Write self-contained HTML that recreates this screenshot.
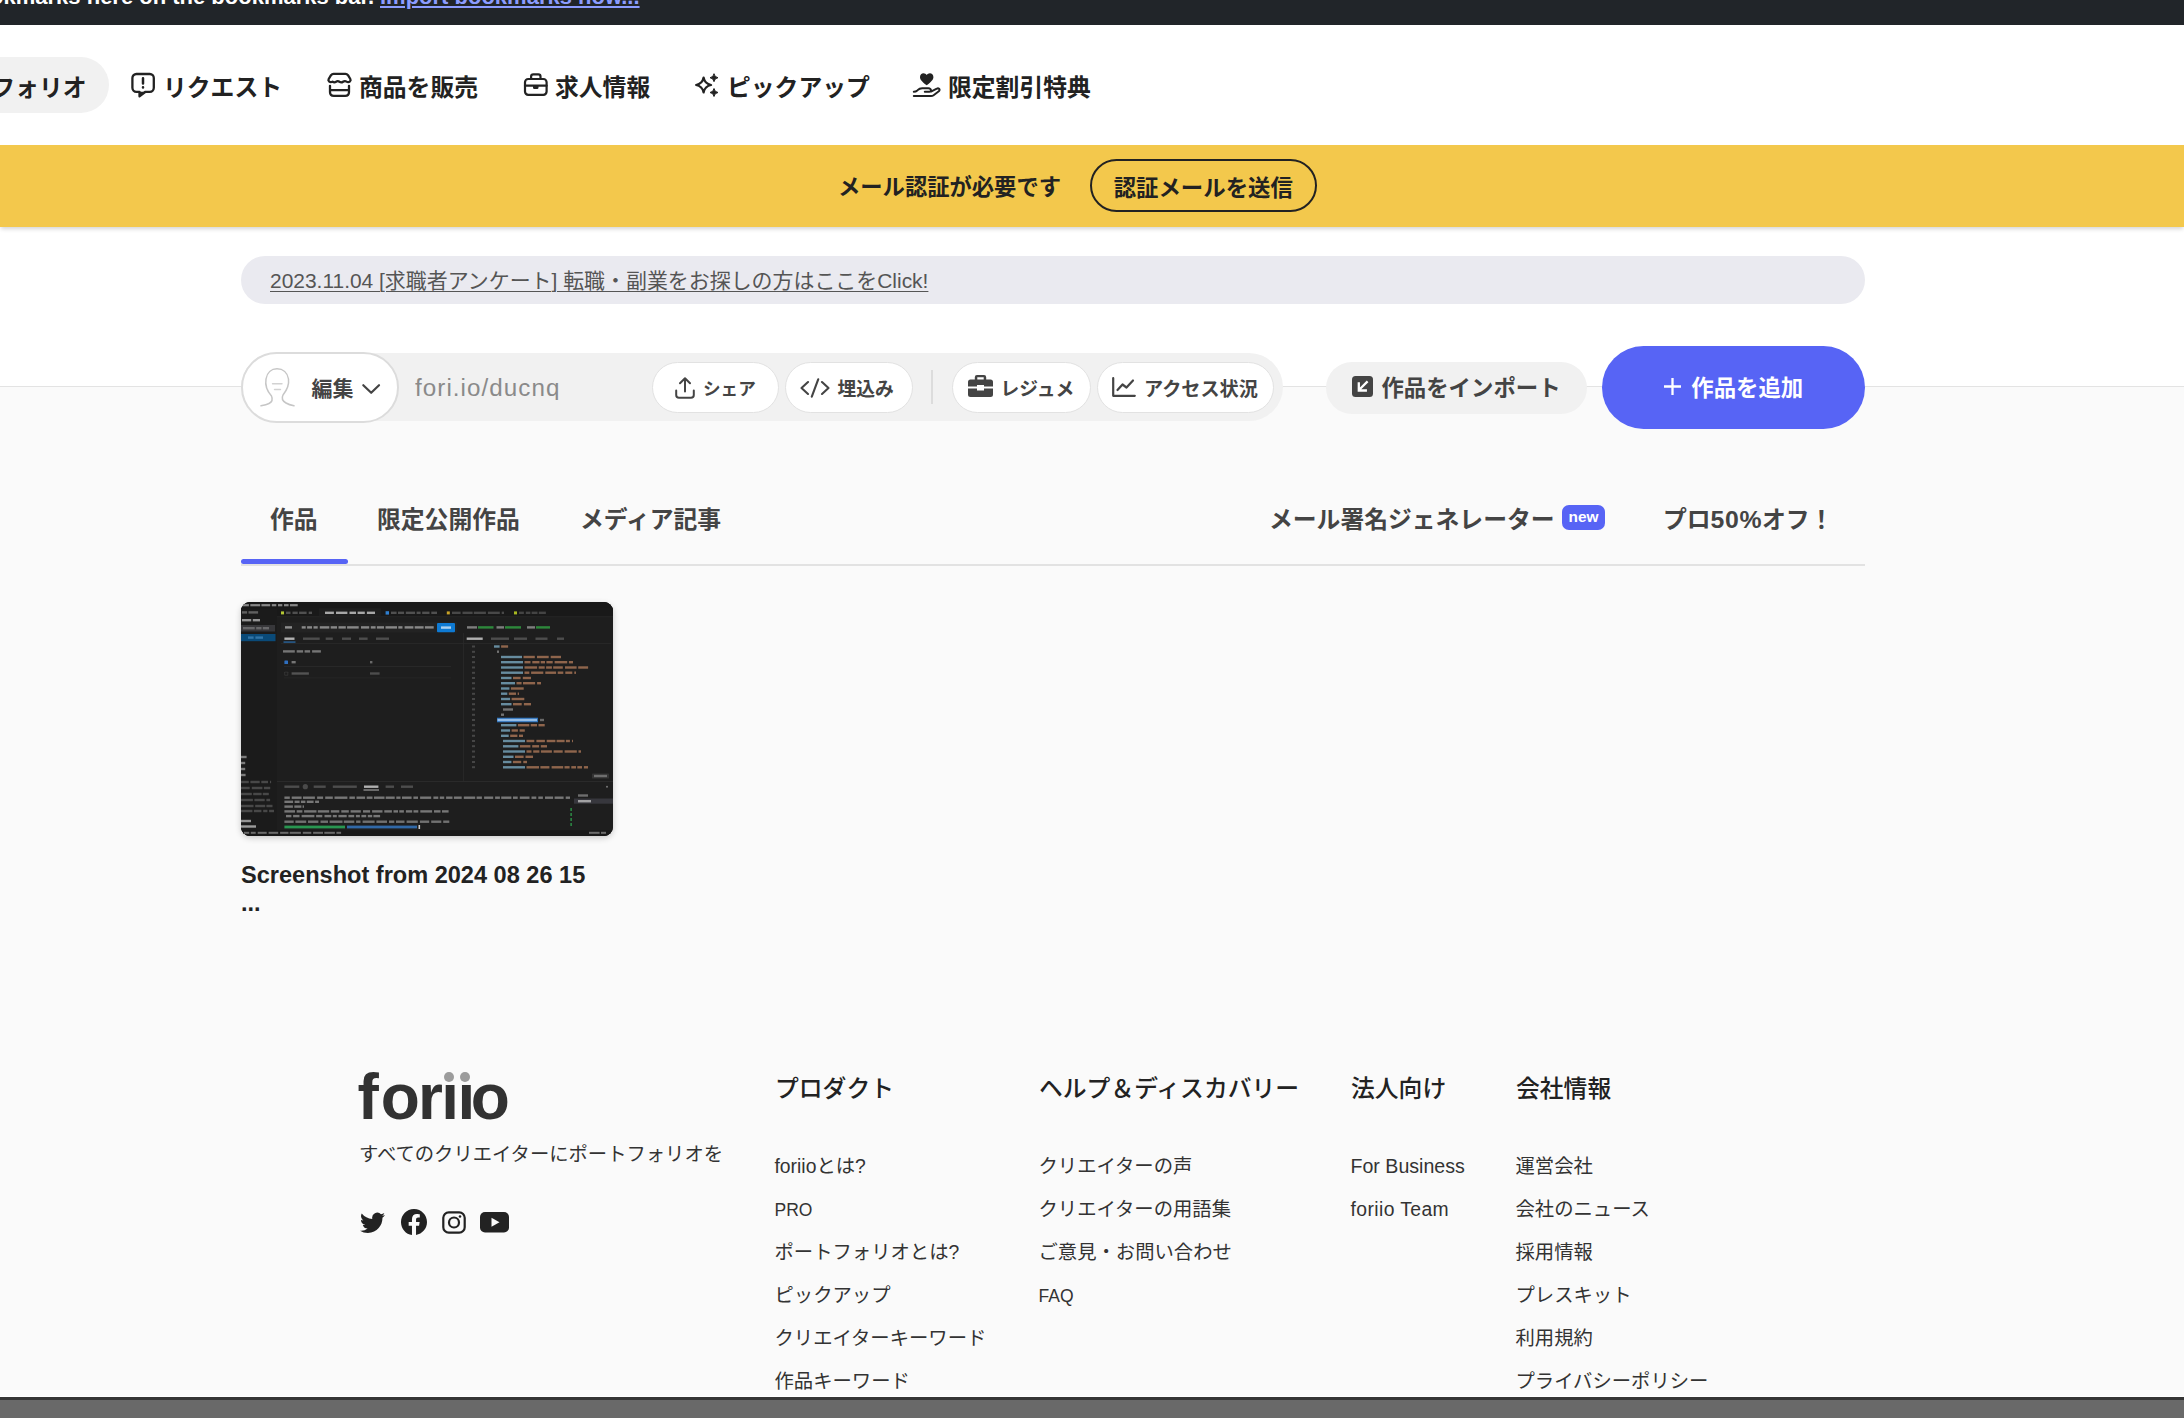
<!DOCTYPE html>
<html lang="ja">
<head>
<meta charset="utf-8">
<title>foriio</title>
<style>
*{box-sizing:border-box;margin:0;padding:0}
html,body{width:2184px;height:1418px;overflow:hidden;background:#fafafa}
body{position:relative;font-family:"Liberation Sans","Noto Sans CJK JP",sans-serif;color:#222;-webkit-font-smoothing:antialiased}
.abs{position:absolute}
a{color:inherit;text-decoration:none}
.jp{font-family:"Liberation Sans","Noto Sans CJK JP",sans-serif}
/* top bar */
#topbar{left:0;top:0;width:2184px;height:24.700px;background:#212529;overflow:hidden}
#topbar .t{position:absolute;top:-16.500px;font-size:22px;font-weight:700;line-height:26px;white-space:nowrap;color:#fff}
#topbar .t1{right:1810px}
#topbar .t2{left:380px;color:#8c9cff;text-decoration:underline;text-decoration-thickness:2px;text-underline-offset:2px}
/* nav */
#nav{left:0;top:25px;width:2184px;height:120px;background:#fff}
.nitem{position:absolute;top:32px;height:56px;display:flex;align-items:center;font-size:23.8px;font-weight:700;color:#222;white-space:nowrap;letter-spacing:0}
.nitem svg{width:24px;height:26px;margin-right:8px;flex:none;overflow:visible}
#pill{left:-120px;width:228.500px;border-radius:28px;background:#f1f1f1;justify-content:flex-end;padding-right:22px}
/* banner */
#banner{left:0;top:144.500px;width:2184px;height:82px;background:#f3c84c;z-index:2;box-shadow:0 3px 4px -1px rgba(0,0,0,.17)}
#banner .msg{position:absolute;left:838px;top:2.500px;height:82px;line-height:82px;font-size:22.300px;font-weight:700;color:#222;white-space:nowrap}
#banner .btn{position:absolute;left:1090px;top:14.500px;width:226.500px;height:52.500px;border:2px solid #222;border-radius:27px;padding-top:1px;font-size:22.4px;font-weight:700;display:flex;align-items:center;justify-content:center;white-space:nowrap}
/* white zone */
#white{left:0;top:227px;width:2184px;height:159.500px;background:#fff;border-bottom:1px solid #e3e3e3}
#notice{left:241px;top:256px;width:1624px;height:48px;border-radius:24px;background:#eaeaf0;padding-left:29px;line-height:50px;font-size:20.950px;color:#555;white-space:nowrap}
#notice span{text-decoration:underline;text-decoration-thickness:1px;text-underline-offset:3px}
/* toolbar */
#tbar{left:241px;top:353px;width:1042px;height:68px;border-radius:34px;background:#f1f1f1}
#edit{left:241px;top:351.500px;width:157.500px;height:71px;border-radius:36px;background:#fff;border:2px solid #dcdcdc}
#edit .lbl{position:absolute;left:68.500px;top:1px;height:67px;line-height:67px;font-size:21px;font-weight:700;color:#444}
#url{left:415px;top:366px;height:33.500px;overflow:hidden;line-height:44px;font-size:24.200px;letter-spacing:1.050px;color:#8a8a8a;white-space:nowrap}
.tb{position:absolute;top:362px;height:51px;border-radius:26px;background:#fff;border:1.500px solid #e2e2e2;display:flex;align-items:center;justify-content:flex-start;font-size:18.800px;font-weight:700;color:#444;white-space:nowrap}
.tb svg{flex:none}
#sep{left:931px;top:370px;width:1.5px;height:34px;background:#dcdcdc}
#import{left:1326px;top:361.500px;width:260.500px;height:52px;padding-bottom:3px;border-radius:26px;background:#f1f1f1;display:flex;align-items:center;justify-content:center;font-size:22.4px;font-weight:700;color:#444;white-space:nowrap}
#add{left:1602px;top:345.500px;width:263px;height:83px;padding-bottom:3px;border-radius:42px;background:#5764f5;display:flex;align-items:center;justify-content:center;font-size:22.4px;font-weight:700;color:#fff;white-space:nowrap}
/* tabs */
.tab{position:absolute;top:499.500px;height:40px;line-height:40px;font-size:23.8px;font-weight:700;color:#444;white-space:nowrap}
#tabline{left:241px;top:564px;width:1624px;height:1.5px;background:#e2e2e2}
#tabact{left:241px;top:559px;width:107px;height:5px;border-radius:3px;background:#5764f5}
#new{left:1562px;top:505px;width:43px;height:25px;border-radius:7px;background:#5764f5;color:#fff;font-size:15.4px;font-weight:700;line-height:24px;text-align:center}
/* card */
#thumb{left:241px;top:602px;width:372px;height:234px;border-radius:9px;overflow:hidden;background:#1d1d1e;box-shadow:0 2px 6px rgba(0,0,0,.2)}
#title{left:241px;top:860.500px;width:372px;font-size:23.550px;font-weight:700;line-height:28px;color:#222;white-space:nowrap}
/* footer */
.fh{position:absolute;top:1069.500px;height:38px;line-height:38px;font-size:23.8px;font-weight:500;color:#222;white-space:nowrap}
.fl{position:absolute;margin-left:-.500px;margin-top:.500px;height:30px;line-height:30px;font-size:19.340px;font-weight:400;color:#333;white-space:nowrap}
#logo{left:357.500px;top:1056.500px;font-size:64px;font-weight:700;line-height:80px;color:#323232;letter-spacing:-1.700px;white-space:nowrap}
#tag{left:359px;top:1139.500px;height:30px;line-height:30px;font-size:19.320px;color:#333;white-space:nowrap}
#bbar{left:0;top:1396px;width:2184px;height:22px;background:#696969;border-top:1.500px solid #fff}
#bbar:before{content:"";position:absolute;left:0;top:0;width:100%;height:3px;background:#353535}
</style>
</head>
<body>
<div id="topbar" class="abs"><span class="t t1">For quick access, place your bookmarks here on the bookmarks bar.</span><a class="t t2">Import bookmarks now...</a></div>

<div id="nav" class="abs">
  <div class="nitem" id="pill">ポートフォリオ</div>
  <div class="nitem" style="left:131px"><svg viewBox="0 0 24 26" fill="none" stroke="#222" stroke-width="2.3" stroke-linejoin="round" stroke-linecap="round"><path d="M5.400 2H18.800a4 4 0 0 1 4 4V15.800a4 4 0 0 1-4 4H14.500L8.500 24.200V19.800H5.400a4 4 0 0 1-4-4V6a4 4 0 0 1 4-4z"/><path fill="#222" stroke="none" d="M8.500 19.800h6L8.500 24.200z"/><path stroke-width="2.500" d="M12 6.300v5.300M12 15.300v.2"/></svg>リクエスト</div>
  <div class="nitem" style="left:327px"><svg viewBox="0 0 24 26" fill="none" stroke="#222" stroke-width="2.300" stroke-linejoin="round" stroke-linecap="round"><path d="M6.500 1.900H18.500Q20 1.900 21 3.200L23.300 7Q24 8.300 23 9.300Q21.300 10.800 19.500 9.600Q17.800 8.500 16 9.800Q14.300 11 12.500 9.800Q10.700 8.500 9 9.800Q7.300 11 5.500 9.600Q3.700 10.800 2 9.300Q1 8.300 1.700 7L4 3.200Q5 1.900 6.500 1.900z"/><path d="M3 13.800V20Q3 23.800 6.800 23.800H18.200Q22 23.800 22 20V13.800M3 18.100H22"/></svg>商品を販売</div>
  <div class="nitem" style="left:523px"><svg viewBox="0 0 24 26" fill="none" stroke="#222" stroke-width="2.200" stroke-linejoin="round" stroke-linecap="round"><rect x="2" y="7" width="21.600" height="15.800" rx="3.200"/><path d="M8.100 7V4.500Q8.100 2.300 10.300 2.300H15.300Q17.500 2.300 17.500 4.500V7M2 13.700H23.600"/><path fill="#222" stroke="none" d="M10 13.700h5.500v2q0 1.400-1.400 1.400h-2.700q-1.400 0-1.400-1.400z"/></svg>求人情報</div>
  <div class="nitem" style="left:695px"><svg viewBox="0 0 24 26" fill="none" stroke="#222" stroke-width="2.200" stroke-linejoin="round"><path d="M8.600 5.500Q9.800 11.800 16.100 13Q9.800 14.200 8.600 20.500Q7.400 14.200 1.100 13Q7.400 11.800 8.600 5.500z"/><path fill="#222" stroke-width="1" d="M19 1.700Q19.500 5.200 23 5.700Q19.500 6.200 19 9.700Q18.500 6.200 15 5.700Q18.500 5.200 19 1.700zM19 16.500Q19.500 20 23 20.500Q19.500 21 19 24.500Q18.500 21 15 20.500Q18.500 20 19 16.500z"/></svg>ピックアップ</div>
  <div class="nitem" style="left:912px"><svg viewBox="0 0 28 26" style="width:28px" fill="none" stroke="#222" stroke-width="2" stroke-linejoin="round" stroke-linecap="round"><path fill="#222" stroke="none" d="M14.700 13.200C9.500 9.300 8 7.300 8 4.900 8 2.800 9.600 1.200 11.500 1.200c1.300 0 2.500.7 3.200 1.800.7-1.100 1.900-1.800 3.200-1.800 1.900 0 3.500 1.600 3.500 3.700 0 2.400-1.500 4.400-6.700 8.300z"/><path d="M1.800 24H19Q20.500 24 21.600 23.200L26.800 19.300Q28.200 17.900 27.100 16.800Q26.100 16 24.800 16.700L19.500 19.400M1.800 19.700Q3.800 19.700 5.300 18.400Q7.600 16.200 10.200 16.200H16.300Q18.800 16.400 19 18.300Q19 19.800 17.300 19.800H12.800"/></svg>限定割引特典</div>
</div>

<div id="banner" class="abs"><div class="msg">メール認証が必要です</div><div class="btn">認証メールを送信</div></div>

<div id="white" class="abs"></div>
<div id="notice" class="abs"><span>2023.11.04 [求職者アンケート] 転職・副業をお探しの方はここをClick!</span></div>

<div id="tbar" class="abs"></div>
<div id="edit" class="abs">
  <svg class="abs" style="left:17px;top:14px" width="35" height="39" viewBox="0 0 35 39" fill="none" stroke="#c6c6c6" stroke-width="1.500" stroke-linecap="round" stroke-linejoin="round"><path d="M11.500 28C7 23 5 17 6 11C7 4.500 11.500.8 17 .8C23 .8 27.500 4.500 28.500 11C29.300 17 27 22 23 27C21.500 30 22.500 33 26 35C28.500 36.500 31.500 37.300 34 37.800M11.500 28C13 31.500 12 34 9 35.500C6.500 36.700 3.500 37.300 1 37.800"/><path stroke="#d2d2d2" stroke-width="1.400" d="M12.500 15.800h9.500M14.500 21.500h6"/></svg>
  <div class="lbl">編集</div>
  <svg class="abs" style="left:118px;top:28px" width="22" height="14" viewBox="0 0 22 14" fill="none" stroke="#444" stroke-width="2.200" stroke-linecap="round" stroke-linejoin="round"><path d="M2.300 3.200l7.900 7.600 7.800-7.600"/></svg>
</div>
<div id="url" class="abs">fori.io/ducnq</div>

<div class="tb" style="left:652px;width:126.500px;padding-left:21.500px;font-size:17.600px"><svg width="20" height="22" viewBox="0 0 20 22" style="margin-right:8.500px" fill="none" stroke="#444" stroke-width="2" stroke-linecap="round" stroke-linejoin="round"><path d="M10 14.500V1.800M5 6.300L10 1.300 15 6.300M1.200 13.500v4.500q0 2.800 2.800 2.800h12q2.800 0 2.800-2.800v-4.500"/></svg>シェア</div>
<div class="tb" style="left:784.500px;width:128px;padding-left:14px"><svg width="30" height="20" viewBox="0 0 30 20" style="margin-right:8px" fill="none" stroke="#444" stroke-width="2.100" stroke-linecap="round" stroke-linejoin="round"><path d="M8 4L1.500 10 8 16M22 4l6.500 6L22 16M18.200 1.300l-6.400 17.400"/></svg>埋込み</div>
<div id="sep" class="abs"></div>
<div class="tb" style="left:952px;width:138.500px;padding-left:14.500px"><svg width="25" height="22" viewBox="0 0 25 22" style="margin-right:8px;margin-top:-4px" fill="#444"><path d="M9 0h7q2.200 0 2.200 2.200V4.500h4.300q2.500 0 2.500 2.500v4.500h-9v-1.500h-7v1.500h-9V7q0-2.500 2.500-2.500h4.300V2.200Q6.800 0 9 0zm.3 2.300V4.500h6.400V2.300zM0 13.500h9v2h7v-2h9v6q0 2.500-2.500 2.500h-20Q0 22 0 19.500z"/></svg>レジュメ</div>
<div class="tb" style="left:1097px;width:176.500px;padding-left:14px;font-size:19.150px"><svg width="24" height="20" viewBox="0 0 24 20" style="margin-right:8px;margin-top:-2px" fill="none" stroke="#444" stroke-width="2.200" stroke-linecap="round" stroke-linejoin="round"><path d="M1.200 1.200V18.800H22.800M5.500 13l5-5.500 4 3 6.500-7"/></svg>アクセス状況</div>

<div id="import" class="abs"><svg width="21" height="21" viewBox="0 0 21 21" style="margin-right:8.500px;margin-top:1px"><rect width="21" height="21" rx="3.500" fill="#444"/><path d="M14.800 6.200l-7.600 7.600M6.800 7.500v7h7" fill="none" stroke="#fff" stroke-width="2.300" stroke-linecap="square"/></svg>作品をインポート</div>
<div id="add" class="abs"><svg width="17" height="17" viewBox="0 0 17 17" style="margin-right:10.500px;margin-top:2px" fill="none" stroke="#fff" stroke-width="2.300"><path d="M8.500 0v17M0 8.500h17"/></svg>作品を追加</div>

<div class="tab" style="left:270px">作品</div>
<div class="tab" style="left:377px">限定公開作品</div>
<div class="tab" style="left:580px">メディア記事</div>
<div class="tab" style="left:1269px">メール署名ジェネレーター</div>
<div id="new" class="abs">new</div>
<div class="tab" style="left:1663px">プロ<span style="font-size:24.800px;letter-spacing:.600px">50%</span>オフ！</div>
<div id="tabline" class="abs"></div>
<div id="tabact" class="abs"></div>

<div id="thumb" class="abs"><svg width="372" height="234" viewBox="0 0 372 234" shape-rendering="geometricPrecision"><rect x="0.0" y="0.0" width="372.0" height="234.0" fill="#1e1e1e"/><rect x="0.0" y="0.0" width="372.0" height="6.2" fill="#181818"/><rect x="0.0" y="6.2" width="372.0" height="8.0" fill="#191919"/><rect x="0.0" y="6.2" width="36.0" height="234.0" fill="#1b1b1b"/><rect x="36.0" y="14.2" width="336.0" height="1.0" fill="#252525"/><rect x="1.0" y="2.1" width="6.9" height="2.2" fill="#d8d8d8" opacity="0.58"/><rect x="9.3" y="2.1" width="9.9" height="2.2" fill="#d8d8d8" opacity="0.58"/><rect x="20.4" y="2.1" width="8.8" height="2.2" fill="#d8d8d8" opacity="0.58"/><rect x="30.8" y="2.1" width="4.5" height="2.2" fill="#d8d8d8" opacity="0.58"/><rect x="37.0" y="2.1" width="4.3" height="2.2" fill="#d8d8d8" opacity="0.58"/><rect x="43.0" y="2.1" width="4.6" height="2.2" fill="#d8d8d8" opacity="0.58"/><rect x="48.9" y="2.1" width="7.8" height="2.2" fill="#d8d8d8" opacity="0.58"/><rect x="1.0" y="9.2" width="5.1" height="2.4" fill="#bbb" opacity="0.43"/><rect x="7.5" y="9.2" width="9.6" height="2.4" fill="#bbb" opacity="0.43"/><rect x="1.0" y="17.0" width="9.2" height="2.4" fill="#eee" opacity="0.58"/><rect x="11.8" y="17.0" width="7.2" height="2.4" fill="#eee" opacity="0.58"/><rect x="0.0" y="23.0" width="34.0" height="6.5" fill="#37373a"/><rect x="2.0" y="25.0" width="11.7" height="2.4" fill="#aaa" opacity="0.43"/><rect x="15.2" y="25.0" width="5.3" height="2.4" fill="#aaa" opacity="0.43"/><rect x="21.8" y="25.0" width="6.2" height="2.4" fill="#aaa" opacity="0.43"/><rect x="0.0" y="32.0" width="34.5" height="7.2" fill="#0a4a78"/><rect x="7.0" y="34.4" width="5.6" height="2.4" fill="#5aa0d8" opacity="0.50"/><rect x="14.4" y="34.4" width="7.6" height="2.4" fill="#5aa0d8" opacity="0.50"/><rect x="0.0" y="153.8" width="5.6" height="2.4" fill="#ddd" opacity="0.50"/><rect x="0.0" y="159.8" width="4.2" height="2.4" fill="#ddd" opacity="0.50"/><rect x="0.0" y="165.8" width="4.2" height="2.4" fill="#ddd" opacity="0.50"/><rect x="0.0" y="171.8" width="4.6" height="2.4" fill="#ddd" opacity="0.50"/><rect x="0.0" y="178.8" width="7.8" height="2.4" fill="#999" opacity="0.36"/><rect x="9.4" y="178.8" width="9.3" height="2.4" fill="#999" opacity="0.36"/><rect x="20.3" y="178.8" width="6.7" height="2.4" fill="#999" opacity="0.36"/><rect x="29.0" y="178.8" width="1.1" height="2.4" fill="#999" opacity="0.36"/><rect x="0.0" y="184.8" width="8.7" height="2.4" fill="#999" opacity="0.36"/><rect x="10.8" y="184.8" width="10.6" height="2.4" fill="#999" opacity="0.36"/><rect x="22.9" y="184.8" width="6.3" height="2.4" fill="#999" opacity="0.36"/><rect x="0.0" y="190.8" width="10.8" height="2.4" fill="#999" opacity="0.36"/><rect x="12.2" y="190.8" width="8.4" height="2.4" fill="#999" opacity="0.36"/><rect x="21.8" y="190.8" width="6.0" height="2.4" fill="#999" opacity="0.36"/><rect x="0.0" y="196.8" width="11.9" height="2.4" fill="#999" opacity="0.36"/><rect x="13.4" y="196.8" width="10.3" height="2.4" fill="#999" opacity="0.36"/><rect x="25.4" y="196.8" width="3.7" height="2.4" fill="#999" opacity="0.36"/><rect x="0.0" y="202.8" width="12.5" height="2.4" fill="#999" opacity="0.36"/><rect x="14.2" y="202.8" width="10.0" height="2.4" fill="#999" opacity="0.36"/><rect x="25.4" y="202.8" width="6.1" height="2.4" fill="#999" opacity="0.36"/><rect x="0.0" y="207.8" width="11.4" height="2.4" fill="#999" opacity="0.36"/><rect x="12.9" y="207.8" width="7.5" height="2.4" fill="#999" opacity="0.36"/><rect x="22.2" y="207.8" width="4.2" height="2.4" fill="#999" opacity="0.36"/><rect x="28.1" y="207.8" width="4.9" height="2.4" fill="#999" opacity="0.36"/><rect x="0.0" y="217.8" width="10.0" height="2.4" fill="#eee" opacity="0.58"/><rect x="0.0" y="223.3" width="15.0" height="2.4" fill="#eee" opacity="0.61"/><rect x="40.0" y="9.4" width="3.0" height="3.0" fill="#b5c734"/><rect x="45.0" y="9.6" width="4.5" height="2.4" fill="#999" opacity="0.43"/><rect x="51.5" y="9.6" width="5.2" height="2.4" fill="#999" opacity="0.43"/><rect x="58.1" y="9.6" width="7.5" height="2.4" fill="#999" opacity="0.43"/><rect x="67.7" y="9.6" width="3.3" height="2.4" fill="#999" opacity="0.43"/><rect x="78.0" y="6.2" width="62.0" height="8.0" fill="#1e1e1e"/><rect x="84.0" y="9.6" width="8.9" height="2.4" fill="#fff" opacity="0.61"/><rect x="95.0" y="9.6" width="11.4" height="2.4" fill="#fff" opacity="0.61"/><rect x="108.5" y="9.6" width="6.5" height="2.4" fill="#fff" opacity="0.61"/><rect x="116.6" y="9.6" width="7.2" height="2.4" fill="#fff" opacity="0.61"/><rect x="125.9" y="9.6" width="8.1" height="2.4" fill="#fff" opacity="0.61"/><rect x="144.6" y="9.2" width="3.4" height="3.4" fill="#2f7fd0"/><rect x="150.0" y="9.6" width="5.6" height="2.4" fill="#999" opacity="0.43"/><rect x="157.0" y="9.6" width="6.1" height="2.4" fill="#999" opacity="0.43"/><rect x="164.8" y="9.6" width="9.3" height="2.4" fill="#999" opacity="0.43"/><rect x="175.6" y="9.6" width="4.0" height="2.4" fill="#999" opacity="0.43"/><rect x="181.2" y="9.6" width="7.3" height="2.4" fill="#999" opacity="0.43"/><rect x="190.3" y="9.6" width="5.7" height="2.4" fill="#999" opacity="0.43"/><rect x="205.8" y="9.4" width="3.0" height="3.0" fill="#c9a227"/><rect x="211.0" y="9.6" width="8.6" height="2.4" fill="#8f8f8f" opacity="0.40"/><rect x="221.5" y="9.6" width="10.1" height="2.4" fill="#8f8f8f" opacity="0.40"/><rect x="232.8" y="9.6" width="12.1" height="2.4" fill="#8f8f8f" opacity="0.40"/><rect x="246.9" y="9.6" width="11.9" height="2.4" fill="#8f8f8f" opacity="0.40"/><rect x="260.7" y="9.6" width="2.3" height="2.4" fill="#8f8f8f" opacity="0.40"/><rect x="273.0" y="9.4" width="3.0" height="3.0" fill="#a8b820"/><rect x="278.0" y="9.6" width="4.9" height="2.4" fill="#8f8f8f" opacity="0.36"/><rect x="284.8" y="9.6" width="4.6" height="2.4" fill="#8f8f8f" opacity="0.36"/><rect x="290.6" y="9.6" width="5.9" height="2.4" fill="#8f8f8f" opacity="0.36"/><rect x="297.8" y="9.6" width="7.1" height="2.4" fill="#8f8f8f" opacity="0.36"/><rect x="40.0" y="20.5" width="176.0" height="10.0" fill="#232323"/><rect x="44.0" y="24.2" width="7.0" height="2.4" fill="#ddd" opacity="0.58"/><rect x="60.7" y="24.2" width="4.0" height="2.4" fill="#ddd" opacity="0.54"/><rect x="66.1" y="24.2" width="4.9" height="2.4" fill="#ddd" opacity="0.54"/><rect x="72.5" y="24.2" width="4.2" height="2.4" fill="#ddd" opacity="0.54"/><rect x="78.8" y="24.2" width="9.5" height="2.4" fill="#ddd" opacity="0.54"/><rect x="89.7" y="24.2" width="6.3" height="2.4" fill="#ddd" opacity="0.54"/><rect x="97.5" y="24.2" width="7.3" height="2.4" fill="#ddd" opacity="0.54"/><rect x="106.1" y="24.2" width="11.6" height="2.4" fill="#ddd" opacity="0.54"/><rect x="120.0" y="24.2" width="8.2" height="2.4" fill="#ddd" opacity="0.54"/><rect x="129.8" y="24.2" width="4.8" height="2.4" fill="#ddd" opacity="0.54"/><rect x="135.9" y="24.2" width="7.1" height="2.4" fill="#ddd" opacity="0.54"/><rect x="144.5" y="24.2" width="11.5" height="2.4" fill="#ddd" opacity="0.54"/><rect x="157.3" y="24.2" width="4.2" height="2.4" fill="#ddd" opacity="0.54"/><rect x="163.6" y="24.2" width="8.8" height="2.4" fill="#ddd" opacity="0.54"/><rect x="173.7" y="24.2" width="8.9" height="2.4" fill="#ddd" opacity="0.54"/><rect x="183.9" y="24.2" width="8.8" height="2.4" fill="#ddd" opacity="0.54"/><rect x="196.0" y="21.0" width="18.0" height="9.2" fill="#0e7ad3" rx="1"/><rect x="200.0" y="24.4" width="10.0" height="2.4" fill="#fff" opacity="0.65"/><rect x="226.0" y="24.2" width="10.0" height="2.4" fill="#ddd" opacity="0.50"/><rect x="237.0" y="24.2" width="15.5" height="2.4" fill="#36c24c" opacity="0.65"/><rect x="255.5" y="24.2" width="7.5" height="2.4" fill="#ddd" opacity="0.50"/><rect x="264.0" y="24.2" width="16.0" height="2.4" fill="#36c24c" opacity="0.65"/><rect x="286.0" y="24.2" width="8.0" height="2.4" fill="#ddd" opacity="0.50"/><rect x="295.0" y="24.2" width="14.0" height="2.4" fill="#36c24c" opacity="0.65"/><rect x="43.4" y="35.5" width="10.1" height="2.4" fill="#fff" opacity="0.65"/><rect x="42.5" y="39.6" width="12.0" height="0.9" fill="#2f8ae0"/><rect x="62.0" y="35.5" width="16.7" height="2.4" fill="#8a8a8a" opacity="0.43"/><rect x="84.7" y="35.5" width="7.1" height="2.4" fill="#8a8a8a" opacity="0.43"/><rect x="101.0" y="35.5" width="9.0" height="2.4" fill="#8a8a8a" opacity="0.43"/><rect x="118.0" y="35.5" width="8.6" height="2.4" fill="#8a8a8a" opacity="0.43"/><rect x="135.0" y="35.5" width="13.0" height="2.4" fill="#8a8a8a" opacity="0.43"/><rect x="40.0" y="41.0" width="330.0" height="0.7" fill="#2c2c2c"/><rect x="225.7" y="35.5" width="16.0" height="2.4" fill="#fff" opacity="0.65"/><rect x="250.0" y="35.5" width="18.0" height="2.4" fill="#8a8a8a" opacity="0.43"/><rect x="273.0" y="35.5" width="13.0" height="2.4" fill="#8a8a8a" opacity="0.43"/><rect x="294.5" y="35.5" width="12.0" height="2.4" fill="#8a8a8a" opacity="0.43"/><rect x="316.0" y="35.5" width="7.0" height="2.4" fill="#8a8a8a" opacity="0.43"/><rect x="222.3" y="31.0" width="0.8" height="148.0" fill="#2b2b2b"/><rect x="42.0" y="48.2" width="11.8" height="2.4" fill="#ccc" opacity="0.50"/><rect x="55.7" y="48.2" width="6.4" height="2.4" fill="#ccc" opacity="0.50"/><rect x="63.6" y="48.2" width="5.5" height="2.4" fill="#ccc" opacity="0.50"/><rect x="71.1" y="48.2" width="8.8" height="2.4" fill="#ccc" opacity="0.50"/><rect x="43.4" y="58.4" width="3.6" height="3.6" fill="#2f6fc0" rx="0.6"/><rect x="50.6" y="59.0" width="4.1" height="2.4" fill="#ccc" opacity="0.50"/><rect x="129.0" y="59.0" width="2.4" height="2.4" fill="#ccc" opacity="0.43"/><rect x="43.0" y="64.3" width="167.0" height="0.6" fill="#303030"/><rect x="43.4" y="69.7" width="3.8" height="3.8" fill="#3a3a3a" rx="0.6"/><rect x="44.1" y="70.4" width="2.4" height="2.4" fill="#1e1e1e"/><rect x="50.6" y="70.3" width="17.3" height="2.4" fill="#9a9a9a" opacity="0.43"/><rect x="129.0" y="70.3" width="9.6" height="2.4" fill="#8a8a8a" opacity="0.43"/><rect x="43.0" y="75.6" width="167.0" height="0.6" fill="#2a2a2a"/><rect x="231.0" y="43.5" width="3.0" height="2.0" fill="#6e6e6e" opacity="0.50"/><rect x="253.0" y="43.3" width="5.6" height="2.4" fill="#9cdcfe" opacity="0.58"/><rect x="260.1" y="43.3" width="7.0" height="2.4" fill="#d7936b" opacity="0.61"/><rect x="231.0" y="48.8" width="3.0" height="2.0" fill="#6e6e6e" opacity="0.50"/><rect x="256.0" y="48.5" width="2.0" height="2.4" fill="#c8c8c8" opacity="0.50"/><rect x="231.0" y="54.0" width="3.0" height="2.0" fill="#6e6e6e" opacity="0.50"/><rect x="260.0" y="53.8" width="21.0" height="2.4" fill="#9cdcfe" opacity="0.58"/><rect x="282.5" y="53.8" width="11.3" height="2.4" fill="#d7936b" opacity="0.61"/><rect x="296.0" y="53.8" width="11.7" height="2.4" fill="#d7936b" opacity="0.61"/><rect x="309.7" y="53.8" width="10.3" height="2.4" fill="#d7936b" opacity="0.61"/><rect x="231.0" y="59.2" width="3.0" height="2.0" fill="#6e6e6e" opacity="0.50"/><rect x="260.0" y="59.0" width="22.0" height="2.4" fill="#9cdcfe" opacity="0.58"/><rect x="283.5" y="59.0" width="6.0" height="2.4" fill="#d7936b" opacity="0.61"/><rect x="291.3" y="59.0" width="7.2" height="2.4" fill="#d7936b" opacity="0.61"/><rect x="299.7" y="59.0" width="4.3" height="2.4" fill="#d7936b" opacity="0.61"/><rect x="305.4" y="59.0" width="6.3" height="2.4" fill="#d7936b" opacity="0.61"/><rect x="313.6" y="59.0" width="12.6" height="2.4" fill="#d7936b" opacity="0.61"/><rect x="327.9" y="59.0" width="4.1" height="2.4" fill="#d7936b" opacity="0.61"/><rect x="231.0" y="64.5" width="3.0" height="2.0" fill="#6e6e6e" opacity="0.50"/><rect x="260.0" y="64.3" width="22.0" height="2.4" fill="#9cdcfe" opacity="0.58"/><rect x="283.5" y="64.3" width="12.6" height="2.4" fill="#d7936b" opacity="0.61"/><rect x="297.7" y="64.3" width="6.0" height="2.4" fill="#d7936b" opacity="0.61"/><rect x="305.1" y="64.3" width="5.8" height="2.4" fill="#d7936b" opacity="0.61"/><rect x="312.2" y="64.3" width="9.6" height="2.4" fill="#d7936b" opacity="0.61"/><rect x="324.0" y="64.3" width="11.6" height="2.4" fill="#d7936b" opacity="0.61"/><rect x="337.2" y="64.3" width="9.9" height="2.4" fill="#d7936b" opacity="0.61"/><rect x="231.0" y="69.8" width="3.0" height="2.0" fill="#6e6e6e" opacity="0.50"/><rect x="260.0" y="69.5" width="22.0" height="2.4" fill="#9cdcfe" opacity="0.58"/><rect x="283.5" y="69.5" width="4.8" height="2.4" fill="#d7936b" opacity="0.61"/><rect x="290.1" y="69.5" width="12.2" height="2.4" fill="#d7936b" opacity="0.61"/><rect x="304.3" y="69.5" width="10.8" height="2.4" fill="#d7936b" opacity="0.61"/><rect x="316.7" y="69.5" width="5.6" height="2.4" fill="#d7936b" opacity="0.61"/><rect x="324.3" y="69.5" width="7.0" height="2.4" fill="#d7936b" opacity="0.61"/><rect x="333.3" y="69.5" width="1.7" height="2.4" fill="#d7936b" opacity="0.61"/><rect x="231.0" y="75.0" width="3.0" height="2.0" fill="#6e6e6e" opacity="0.50"/><rect x="260.0" y="74.8" width="10.5" height="2.4" fill="#9cdcfe" opacity="0.58"/><rect x="272.0" y="74.8" width="7.6" height="2.4" fill="#d7936b" opacity="0.61"/><rect x="281.8" y="74.8" width="8.2" height="2.4" fill="#d7936b" opacity="0.61"/><rect x="231.0" y="80.2" width="3.0" height="2.0" fill="#6e6e6e" opacity="0.50"/><rect x="260.0" y="80.0" width="14.0" height="2.4" fill="#9cdcfe" opacity="0.58"/><rect x="275.5" y="80.0" width="5.1" height="2.4" fill="#d7936b" opacity="0.61"/><rect x="282.0" y="80.0" width="12.1" height="2.4" fill="#d7936b" opacity="0.61"/><rect x="296.1" y="80.0" width="3.9" height="2.4" fill="#d7936b" opacity="0.61"/><rect x="231.0" y="85.5" width="3.0" height="2.0" fill="#6e6e6e" opacity="0.50"/><rect x="260.0" y="85.3" width="8.4" height="2.4" fill="#9cdcfe" opacity="0.58"/><rect x="269.9" y="85.3" width="12.8" height="2.4" fill="#d7936b" opacity="0.61"/><rect x="231.0" y="90.8" width="3.0" height="2.0" fill="#6e6e6e" opacity="0.50"/><rect x="260.0" y="90.5" width="6.3" height="2.4" fill="#9cdcfe" opacity="0.58"/><rect x="267.8" y="90.5" width="7.2" height="2.4" fill="#d7936b" opacity="0.61"/><rect x="276.7" y="90.5" width="1.3" height="2.4" fill="#d7936b" opacity="0.61"/><rect x="231.0" y="96.0" width="3.0" height="2.0" fill="#6e6e6e" opacity="0.50"/><rect x="260.0" y="95.8" width="9.1" height="2.4" fill="#9cdcfe" opacity="0.58"/><rect x="270.6" y="95.8" width="12.7" height="2.4" fill="#d7936b" opacity="0.61"/><rect x="231.0" y="101.2" width="3.0" height="2.0" fill="#6e6e6e" opacity="0.50"/><rect x="260.0" y="101.0" width="10.5" height="2.4" fill="#9cdcfe" opacity="0.58"/><rect x="272.0" y="101.0" width="8.7" height="2.4" fill="#d7936b" opacity="0.61"/><rect x="282.9" y="101.0" width="7.1" height="2.4" fill="#d7936b" opacity="0.61"/><rect x="231.0" y="106.5" width="3.0" height="2.0" fill="#6e6e6e" opacity="0.50"/><rect x="262.0" y="106.3" width="10.0" height="2.4" fill="#c8c8c8" opacity="0.50"/><rect x="231.0" y="111.8" width="3.0" height="2.0" fill="#6e6e6e" opacity="0.50"/><rect x="260.0" y="111.5" width="3.0" height="2.4" fill="#c8c8c8" opacity="0.50"/><rect x="231.0" y="117.0" width="3.0" height="2.0" fill="#6e6e6e" opacity="0.50"/><rect x="256.0" y="115.7" width="41.0" height="4.6" fill="#2a6fb8"/><rect x="256.5" y="116.8" width="39.5" height="2.4" fill="#cfe6ff" opacity="0.65"/><rect x="299.0" y="116.8" width="4.0" height="2.4" fill="#ccc" opacity="0.43"/><rect x="231.0" y="122.2" width="3.0" height="2.0" fill="#6e6e6e" opacity="0.50"/><rect x="260.0" y="122.0" width="15.4" height="2.4" fill="#9cdcfe" opacity="0.58"/><rect x="276.9" y="122.0" width="11.4" height="2.4" fill="#d7936b" opacity="0.61"/><rect x="289.7" y="122.0" width="6.3" height="2.4" fill="#d7936b" opacity="0.61"/><rect x="297.5" y="122.0" width="6.2" height="2.4" fill="#d7936b" opacity="0.61"/><rect x="231.0" y="127.5" width="3.0" height="2.0" fill="#6e6e6e" opacity="0.50"/><rect x="260.0" y="127.3" width="9.1" height="2.4" fill="#9cdcfe" opacity="0.58"/><rect x="270.6" y="127.3" width="6.3" height="2.4" fill="#d7936b" opacity="0.61"/><rect x="278.6" y="127.3" width="5.2" height="2.4" fill="#d7936b" opacity="0.61"/><rect x="231.0" y="132.8" width="3.0" height="2.0" fill="#6e6e6e" opacity="0.50"/><rect x="260.0" y="132.6" width="7.7" height="2.4" fill="#9cdcfe" opacity="0.58"/><rect x="269.2" y="132.6" width="7.2" height="2.4" fill="#d7936b" opacity="0.61"/><rect x="278.0" y="132.6" width="4.0" height="2.4" fill="#d7936b" opacity="0.61"/><rect x="231.0" y="138.0" width="3.0" height="2.0" fill="#6e6e6e" opacity="0.50"/><rect x="262.0" y="137.8" width="22.0" height="2.4" fill="#9cdcfe" opacity="0.58"/><rect x="285.5" y="137.8" width="7.8" height="2.4" fill="#d7936b" opacity="0.61"/><rect x="295.4" y="137.8" width="8.5" height="2.4" fill="#d7936b" opacity="0.61"/><rect x="305.7" y="137.8" width="8.7" height="2.4" fill="#d7936b" opacity="0.61"/><rect x="315.6" y="137.8" width="8.0" height="2.4" fill="#d7936b" opacity="0.61"/><rect x="324.9" y="137.8" width="4.0" height="2.4" fill="#d7936b" opacity="0.61"/><rect x="331.0" y="137.8" width="1.0" height="2.4" fill="#d7936b" opacity="0.61"/><rect x="231.0" y="143.2" width="3.0" height="2.0" fill="#6e6e6e" opacity="0.50"/><rect x="262.0" y="143.1" width="15.4" height="2.4" fill="#9cdcfe" opacity="0.58"/><rect x="278.9" y="143.1" width="10.5" height="2.4" fill="#d7936b" opacity="0.61"/><rect x="291.2" y="143.1" width="6.9" height="2.4" fill="#d7936b" opacity="0.61"/><rect x="299.8" y="143.1" width="6.2" height="2.4" fill="#d7936b" opacity="0.61"/><rect x="231.0" y="148.5" width="3.0" height="2.0" fill="#6e6e6e" opacity="0.50"/><rect x="262.0" y="148.3" width="22.0" height="2.4" fill="#9cdcfe" opacity="0.58"/><rect x="285.5" y="148.3" width="5.0" height="2.4" fill="#d7936b" opacity="0.61"/><rect x="292.2" y="148.3" width="6.2" height="2.4" fill="#d7936b" opacity="0.61"/><rect x="299.9" y="148.3" width="11.0" height="2.4" fill="#d7936b" opacity="0.61"/><rect x="312.6" y="148.3" width="9.1" height="2.4" fill="#d7936b" opacity="0.61"/><rect x="323.6" y="148.3" width="12.2" height="2.4" fill="#d7936b" opacity="0.61"/><rect x="337.5" y="148.3" width="2.5" height="2.4" fill="#d7936b" opacity="0.61"/><rect x="231.0" y="153.8" width="3.0" height="2.0" fill="#6e6e6e" opacity="0.50"/><rect x="262.0" y="153.6" width="10.5" height="2.4" fill="#9cdcfe" opacity="0.58"/><rect x="274.0" y="153.6" width="8.6" height="2.4" fill="#d7936b" opacity="0.61"/><rect x="284.5" y="153.6" width="7.5" height="2.4" fill="#d7936b" opacity="0.61"/><rect x="231.0" y="159.0" width="3.0" height="2.0" fill="#6e6e6e" opacity="0.50"/><rect x="262.0" y="158.8" width="8.4" height="2.4" fill="#9cdcfe" opacity="0.58"/><rect x="271.9" y="158.8" width="8.3" height="2.4" fill="#d7936b" opacity="0.61"/><rect x="282.3" y="158.8" width="3.7" height="2.4" fill="#d7936b" opacity="0.61"/><rect x="231.0" y="164.2" width="3.0" height="2.0" fill="#6e6e6e" opacity="0.50"/><rect x="262.0" y="164.1" width="22.0" height="2.4" fill="#9cdcfe" opacity="0.58"/><rect x="285.5" y="164.1" width="12.5" height="2.4" fill="#d7936b" opacity="0.61"/><rect x="299.4" y="164.1" width="9.0" height="2.4" fill="#d7936b" opacity="0.61"/><rect x="310.6" y="164.1" width="11.6" height="2.4" fill="#d7936b" opacity="0.61"/><rect x="323.5" y="164.1" width="5.1" height="2.4" fill="#d7936b" opacity="0.61"/><rect x="330.3" y="164.1" width="4.7" height="2.4" fill="#d7936b" opacity="0.61"/><rect x="336.3" y="164.1" width="4.7" height="2.4" fill="#d7936b" opacity="0.61"/><rect x="342.9" y="164.1" width="4.1" height="2.4" fill="#d7936b" opacity="0.61"/><rect x="351.0" y="171.5" width="17.0" height="5.0" fill="#333" rx="0.5"/><rect x="353.0" y="172.8" width="13.0" height="2.4" fill="#aaa" opacity="0.50"/><rect x="36.0" y="179.2" width="336.0" height="0.8" fill="#2e2e2e"/><rect x="43.4" y="183.5" width="14.9" height="2.4" fill="#8a8a8a" opacity="0.43"/><circle cx="64.3" cy="184.7" r="2.6" fill="#4a4a4a"/><rect x="72.7" y="183.5" width="12.0" height="2.4" fill="#8a8a8a" opacity="0.43"/><rect x="91.8" y="183.5" width="24.0" height="2.4" fill="#8a8a8a" opacity="0.43"/><rect x="144.6" y="183.5" width="8.4" height="2.4" fill="#8a8a8a" opacity="0.43"/><rect x="160.0" y="183.5" width="12.0" height="2.4" fill="#8a8a8a" opacity="0.43"/><rect x="123.0" y="183.5" width="14.4" height="2.4" fill="#fff" opacity="0.65"/><rect x="122.5" y="187.6" width="15.5" height="0.8" fill="#ddd"/><rect x="43.4" y="194.5" width="5.4" height="2.4" fill="#d0d0d0" opacity="0.50"/><rect x="50.7" y="194.5" width="9.9" height="2.4" fill="#d0d0d0" opacity="0.50"/><rect x="62.0" y="194.5" width="11.9" height="2.4" fill="#d0d0d0" opacity="0.50"/><rect x="76.1" y="194.5" width="6.0" height="2.4" fill="#d0d0d0" opacity="0.50"/><rect x="84.2" y="194.5" width="7.6" height="2.4" fill="#d0d0d0" opacity="0.50"/><rect x="93.5" y="194.5" width="12.9" height="2.4" fill="#d0d0d0" opacity="0.50"/><rect x="108.4" y="194.5" width="5.5" height="2.4" fill="#d0d0d0" opacity="0.50"/><rect x="115.5" y="194.5" width="8.6" height="2.4" fill="#d0d0d0" opacity="0.50"/><rect x="125.7" y="194.5" width="5.8" height="2.4" fill="#d0d0d0" opacity="0.50"/><rect x="133.0" y="194.5" width="10.5" height="2.4" fill="#d0d0d0" opacity="0.50"/><rect x="144.7" y="194.5" width="9.0" height="2.4" fill="#d0d0d0" opacity="0.50"/><rect x="155.3" y="194.5" width="4.2" height="2.4" fill="#d0d0d0" opacity="0.50"/><rect x="161.0" y="194.5" width="9.6" height="2.4" fill="#d0d0d0" opacity="0.50"/><rect x="172.4" y="194.5" width="4.6" height="2.4" fill="#d0d0d0" opacity="0.50"/><rect x="179.1" y="194.5" width="11.1" height="2.4" fill="#d0d0d0" opacity="0.50"/><rect x="192.4" y="194.5" width="4.9" height="2.4" fill="#d0d0d0" opacity="0.50"/><rect x="198.8" y="194.5" width="4.4" height="2.4" fill="#d0d0d0" opacity="0.50"/><rect x="205.1" y="194.5" width="6.4" height="2.4" fill="#d0d0d0" opacity="0.50"/><rect x="212.9" y="194.5" width="7.8" height="2.4" fill="#d0d0d0" opacity="0.50"/><rect x="222.8" y="194.5" width="11.4" height="2.4" fill="#d0d0d0" opacity="0.50"/><rect x="235.6" y="194.5" width="5.3" height="2.4" fill="#d0d0d0" opacity="0.50"/><rect x="243.1" y="194.5" width="9.1" height="2.4" fill="#d0d0d0" opacity="0.50"/><rect x="254.1" y="194.5" width="4.8" height="2.4" fill="#d0d0d0" opacity="0.50"/><rect x="260.2" y="194.5" width="10.2" height="2.4" fill="#d0d0d0" opacity="0.50"/><rect x="272.0" y="194.5" width="4.7" height="2.4" fill="#d0d0d0" opacity="0.50"/><rect x="278.8" y="194.5" width="9.7" height="2.4" fill="#d0d0d0" opacity="0.50"/><rect x="290.5" y="194.5" width="4.8" height="2.4" fill="#d0d0d0" opacity="0.50"/><rect x="297.3" y="194.5" width="4.6" height="2.4" fill="#d0d0d0" opacity="0.50"/><rect x="304.0" y="194.5" width="8.1" height="2.4" fill="#d0d0d0" opacity="0.50"/><rect x="313.6" y="194.5" width="9.0" height="2.4" fill="#d0d0d0" opacity="0.50"/><rect x="324.7" y="194.5" width="4.3" height="2.4" fill="#d0d0d0" opacity="0.50"/><rect x="43.4" y="198.6" width="8.7" height="2.4" fill="#d0d0d0" opacity="0.50"/><rect x="53.6" y="198.6" width="5.0" height="2.4" fill="#d0d0d0" opacity="0.50"/><rect x="59.9" y="198.6" width="4.5" height="2.4" fill="#d0d0d0" opacity="0.50"/><rect x="65.8" y="198.6" width="6.8" height="2.4" fill="#d0d0d0" opacity="0.50"/><rect x="74.1" y="198.6" width="3.9" height="2.4" fill="#d0d0d0" opacity="0.50"/><rect x="43.4" y="203.4" width="8.5" height="2.4" fill="#d0d0d0" opacity="0.50"/><rect x="53.3" y="203.4" width="7.1" height="2.4" fill="#d0d0d0" opacity="0.50"/><rect x="61.6" y="203.4" width="1.4" height="2.4" fill="#d0d0d0" opacity="0.50"/><rect x="43.4" y="208.2" width="10.6" height="2.4" fill="#d0d0d0" opacity="0.50"/><rect x="55.7" y="208.2" width="5.7" height="2.4" fill="#d0d0d0" opacity="0.50"/><rect x="63.1" y="208.2" width="12.4" height="2.4" fill="#d0d0d0" opacity="0.50"/><rect x="76.8" y="208.2" width="11.4" height="2.4" fill="#d0d0d0" opacity="0.50"/><rect x="89.8" y="208.2" width="8.5" height="2.4" fill="#d0d0d0" opacity="0.50"/><rect x="100.3" y="208.2" width="7.5" height="2.4" fill="#d0d0d0" opacity="0.50"/><rect x="109.6" y="208.2" width="10.2" height="2.4" fill="#d0d0d0" opacity="0.50"/><rect x="122.0" y="208.2" width="7.1" height="2.4" fill="#d0d0d0" opacity="0.50"/><rect x="131.1" y="208.2" width="10.4" height="2.4" fill="#d0d0d0" opacity="0.50"/><rect x="143.3" y="208.2" width="7.6" height="2.4" fill="#d0d0d0" opacity="0.50"/><rect x="152.5" y="208.2" width="4.5" height="2.4" fill="#d0d0d0" opacity="0.50"/><rect x="158.3" y="208.2" width="4.6" height="2.4" fill="#d0d0d0" opacity="0.50"/><rect x="164.9" y="208.2" width="6.3" height="2.4" fill="#d0d0d0" opacity="0.50"/><rect x="172.5" y="208.2" width="4.8" height="2.4" fill="#d0d0d0" opacity="0.50"/><rect x="179.3" y="208.2" width="11.8" height="2.4" fill="#d0d0d0" opacity="0.50"/><rect x="193.0" y="208.2" width="6.5" height="2.4" fill="#d0d0d0" opacity="0.50"/><rect x="201.0" y="208.2" width="6.6" height="2.4" fill="#d0d0d0" opacity="0.50"/><rect x="45.0" y="212.9" width="5.4" height="2.4" fill="#d0d0d0" opacity="0.50"/><rect x="52.1" y="212.9" width="6.4" height="2.4" fill="#d0d0d0" opacity="0.50"/><rect x="60.6" y="212.9" width="12.8" height="2.4" fill="#d0d0d0" opacity="0.50"/><rect x="75.1" y="212.9" width="6.2" height="2.4" fill="#d0d0d0" opacity="0.50"/><rect x="83.5" y="212.9" width="6.8" height="2.4" fill="#d0d0d0" opacity="0.50"/><rect x="91.8" y="212.9" width="4.0" height="2.4" fill="#d0d0d0" opacity="0.50"/><rect x="97.4" y="212.9" width="8.3" height="2.4" fill="#d0d0d0" opacity="0.50"/><rect x="107.4" y="212.9" width="5.8" height="2.4" fill="#d0d0d0" opacity="0.50"/><rect x="114.9" y="212.9" width="4.0" height="2.4" fill="#d0d0d0" opacity="0.50"/><rect x="120.4" y="212.9" width="4.8" height="2.4" fill="#d0d0d0" opacity="0.50"/><rect x="126.8" y="212.9" width="4.4" height="2.4" fill="#d0d0d0" opacity="0.50"/><rect x="132.4" y="212.9" width="6.7" height="2.4" fill="#d0d0d0" opacity="0.50"/><rect x="43.4" y="218.5" width="9.3" height="2.4" fill="#d0d0d0" opacity="0.47"/><rect x="54.4" y="218.5" width="10.8" height="2.4" fill="#d0d0d0" opacity="0.47"/><rect x="67.0" y="218.5" width="10.4" height="2.4" fill="#d0d0d0" opacity="0.47"/><rect x="79.5" y="218.5" width="7.5" height="2.4" fill="#d0d0d0" opacity="0.47"/><rect x="88.6" y="218.5" width="12.9" height="2.4" fill="#d0d0d0" opacity="0.47"/><rect x="102.8" y="218.5" width="10.5" height="2.4" fill="#d0d0d0" opacity="0.47"/><rect x="115.1" y="218.5" width="4.4" height="2.4" fill="#d0d0d0" opacity="0.47"/><rect x="121.6" y="218.5" width="12.0" height="2.4" fill="#d0d0d0" opacity="0.47"/><rect x="135.4" y="218.5" width="10.6" height="2.4" fill="#d0d0d0" opacity="0.47"/><rect x="148.0" y="218.5" width="5.3" height="2.4" fill="#d0d0d0" opacity="0.47"/><rect x="155.0" y="218.5" width="8.5" height="2.4" fill="#d0d0d0" opacity="0.47"/><rect x="165.6" y="218.5" width="11.2" height="2.4" fill="#d0d0d0" opacity="0.47"/><rect x="178.9" y="218.5" width="9.3" height="2.4" fill="#d0d0d0" opacity="0.47"/><rect x="190.2" y="218.5" width="10.1" height="2.4" fill="#d0d0d0" opacity="0.47"/><rect x="202.2" y="218.5" width="6.1" height="2.4" fill="#d0d0d0" opacity="0.47"/><rect x="43.4" y="223.6" width="60.6" height="2.8" fill="#2fd06a" opacity="0.68"/><rect x="106.0" y="223.6" width="70.0" height="2.8" fill="#3b8eea" opacity="0.68"/><rect x="177.5" y="223.0" width="1.6" height="4.0" fill="#ccc"/><rect x="329.5" y="206.0" width="1.2" height="3.0" fill="#2fa84f"/><rect x="329.5" y="211.0" width="1.2" height="3.0" fill="#2fa84f"/><rect x="329.5" y="216.0" width="1.2" height="3.0" fill="#2fa84f"/><rect x="329.5" y="221.0" width="1.2" height="3.0" fill="#2fa84f"/><rect x="337.0" y="192.3" width="10.0" height="2.4" fill="#bbb" opacity="0.50"/><rect x="333.0" y="196.5" width="39.0" height="5.2" fill="#37373d"/><rect x="337.0" y="198.0" width="13.0" height="2.4" fill="#eee" opacity="0.58"/><circle cx="366" cy="184.7" r="1" fill="#777"/><rect x="0.0" y="228.3" width="372.0" height="5.7" fill="#181818"/><rect x="3.0" y="229.8" width="5.2" height="2.0" fill="#bdbdbd" opacity="0.50"/><rect x="9.8" y="229.8" width="4.9" height="2.0" fill="#bdbdbd" opacity="0.50"/><rect x="16.7" y="229.8" width="9.0" height="2.0" fill="#bdbdbd" opacity="0.50"/><rect x="27.6" y="229.8" width="9.6" height="2.0" fill="#bdbdbd" opacity="0.50"/><rect x="39.1" y="229.8" width="8.4" height="2.0" fill="#bdbdbd" opacity="0.50"/><rect x="48.7" y="229.8" width="11.2" height="2.0" fill="#bdbdbd" opacity="0.50"/><rect x="61.8" y="229.8" width="8.5" height="2.0" fill="#bdbdbd" opacity="0.50"/><rect x="72.1" y="229.8" width="9.9" height="2.0" fill="#bdbdbd" opacity="0.50"/><rect x="83.3" y="229.8" width="10.6" height="2.0" fill="#bdbdbd" opacity="0.50"/><rect x="95.4" y="229.8" width="4.7" height="2.0" fill="#bdbdbd" opacity="0.50"/><rect x="348.0" y="229.8" width="10.6" height="2.0" fill="#bdbdbd" opacity="0.50"/><rect x="360.0" y="229.8" width="5.0" height="2.0" fill="#bdbdbd" opacity="0.50"/></svg></div>
<div id="title" class="abs">Screenshot from 2024 08 26 15<br>...</div>

<div id="logo" class="abs"><span style="letter-spacing:1.900px">f</span>ori<span style="letter-spacing:-4.400px">i</span>o</div>
<div class="abs" style="left:443px;top:1069px;width:28px;height:12.500px;background:#fafafa"></div><div class="abs" style="left:444px;top:1072.300px;width:9.800px;height:9.800px;border-radius:50%;background:#9c9c9c"></div><div class="abs" style="left:459.800px;top:1072.300px;width:9.800px;height:9.800px;border-radius:50%;background:#9c9c9c"></div>
<div id="tag" class="abs">すべてのクリエイターにポートフォリオを</div>

<svg class="abs" style="left:359.500px;top:1211px" width="25" height="22" viewBox="0 0 16 14"><path fill="#222" d="M5.026 14c6.038 0 9.341-5.003 9.341-9.334 0-.14 0-.282-.006-.422A6.685 6.685 0 0 0 16 2.542a6.658 6.658 0 0 1-1.889.518A3.301 3.301 0 0 0 15.558 1.243a6.533 6.533 0 0 1-2.087.793A3.286 3.286 0 0 0 7.875 5.030a9.325 9.325 0 0 1-6.767-3.429 3.289 3.289 0 0 0 1.018 4.382A3.323 3.323 0 0 1 .64 5.575v.045a3.288 3.288 0 0 0 2.632 3.218 3.203 3.203 0 0 1-.865.115 3.230 3.230 0 0 1-.614-.057 3.283 3.283 0 0 0 3.067 2.277A6.588 6.588 0 0 1 .78 12.580a6.320 6.320 0 0 1-.78-.045A9.344 9.344 0 0 0 5.026 14z"/></svg>
<svg class="abs" style="left:401px;top:1209px" width="26" height="26" viewBox="0 0 16 16"><path fill="#222" d="M16 8.049c0-4.446-3.582-8.050-8-8.050C3.580 0-.002 3.603-.002 8.050c0 4.017 2.926 7.347 6.750 7.951v-5.625h-2.030V8.050H6.750V6.275c0-2.017 1.195-3.131 3.022-3.131.876 0 1.791.157 1.791.157v1.980h-1.009c-.993 0-1.303.621-1.303 1.258v1.510h2.218l-.354 2.326H9.250V16c3.824-.604 6.750-3.934 6.750-7.951z"/></svg>
<svg class="abs" style="left:442px;top:1211px" width="24" height="23" viewBox="0 0 24 23" fill="none" stroke="#222" stroke-width="2.200"><rect x="1.300" y="1.300" width="21.400" height="20.400" rx="5.500"/><circle cx="12" cy="11.500" r="5"/><circle cx="18" cy="5.500" r="1.300" fill="#222" stroke="none"/></svg>
<svg class="abs" style="left:480px;top:1212px" width="29" height="21" viewBox="0 0 29 21"><rect width="29" height="20.500" rx="5" fill="#222"/><path d="M11.500 5.800v9l8-4.500z" fill="#fafafa"/></svg>

<div class="fh" style="left:775px">プロダクト</div>
<div class="fh" style="left:1039px">ヘルプ＆ディスカバリー</div>
<div class="fh" style="left:1351px">法人向け</div>
<div class="fh" style="left:1516px">会社情報</div>

<div class="fl" style="left:775px;top:1150px">foriioとは?</div>
<div class="fl" style="left:775px;top:1193px"><span style="font-size:17.500px">PRO</span></div>
<div class="fl" style="left:775px;top:1236px">ポートフォリオとは?</div>
<div class="fl" style="left:775px;top:1279px">ピックアップ</div>
<div class="fl" style="left:775px;top:1322px">クリエイターキーワード</div>
<div class="fl" style="left:775px;top:1365px">作品キーワード</div>

<div class="fl" style="left:1039px;top:1150px">クリエイターの声</div>
<div class="fl" style="left:1039px;top:1193px">クリエイターの用語集</div>
<div class="fl" style="left:1039px;top:1236px">ご意見・お問い合わせ</div>
<div class="fl" style="left:1039px;top:1279px"><span style="font-size:17.500px">FAQ</span></div>

<div class="fl" style="left:1351px;top:1150px;font-size:19.600px">For Business</div>
<div class="fl" style="left:1351px;top:1193px;letter-spacing:.400px">foriio Team</div>

<div class="fl" style="left:1516px;top:1150px">運営会社</div>
<div class="fl" style="left:1516px;top:1193px">会社のニュース</div>
<div class="fl" style="left:1516px;top:1236px">採用情報</div>
<div class="fl" style="left:1516px;top:1279px">プレスキット</div>
<div class="fl" style="left:1516px;top:1322px">利用規約</div>
<div class="fl" style="left:1516px;top:1365px">プライバシーポリシー</div>

<div id="bbar" class="abs"></div>
</body>
</html>
